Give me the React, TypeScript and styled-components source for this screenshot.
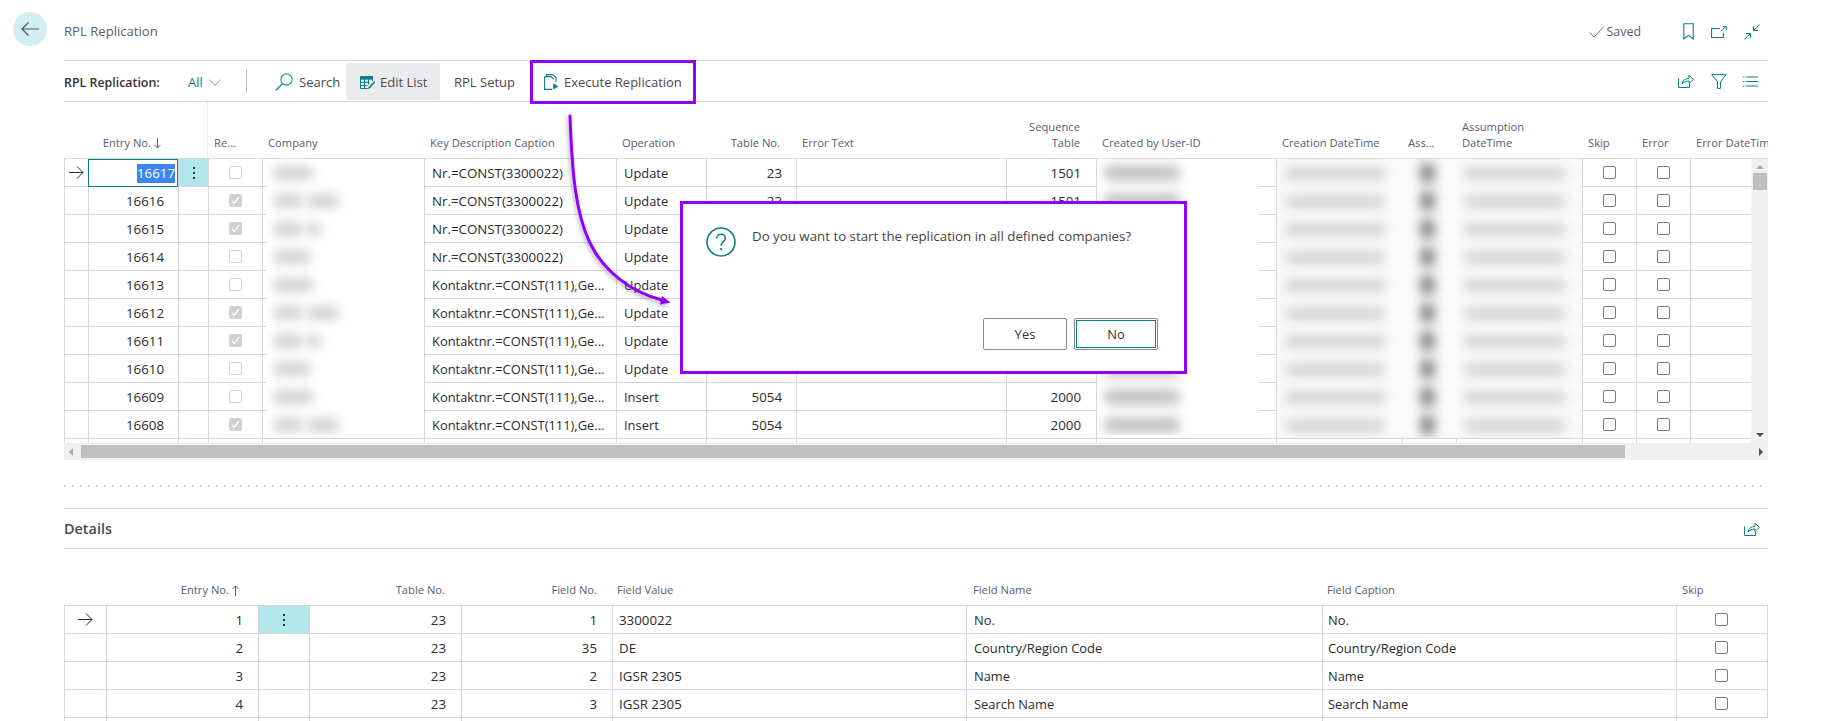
import React from "react";
import styled, { createGlobalStyle } from "styled-components";

const TEAL = "#0a7f85";
const LINE = "#d3d4dc";
const PURPLE = "#9000fa";
const FONT = `"Open Sans", "Noto Sans", "Liberation Sans", sans-serif`;

const Global = createGlobalStyle`
  html, body { margin: 0; padding: 0; background: #fff; overflow: hidden; height: 721px; }
  * { box-sizing: border-box; }
  body { font-family: ${FONT}; font-size: 13px; color: #212121; }
`;

const Page = styled.div`
  position: relative;
  display: flex;
  width: 1830px;
  height: 721px;
  overflow: hidden;
`;
const Gutter = styled.div`
  width: 64px;
  flex: none;
  padding: 12px 0 0 13px;
`;
const BackButton = styled.div`
  width: 34px;
  height: 34px;
  border-radius: 50%;
  background: #d3eef0;
  display: flex;
  align-items: center;
  justify-content: center;
  color: #555;
`;
const Main = styled.div`
  width: 1704px;
  flex: none;
`;
const TopBar = styled.div`
  height: 61px;
  border-bottom: 1px solid #d6d6d6;
  display: flex;
  align-items: center;
  padding-top: 3px;
`;
const PageTitle = styled.div`
  font-size: 13.1px;
  color: #56606e;
  flex: 1;
  margin-top: -2px;
`;
const Saved = styled.div`
  display: flex;
  align-items: center;
  gap: 2px;
  font-size: 12.4px;
  color: #56606e;
  margin-right: 42px;
`;
const IconRow = styled.div<{ $gap: number; $right: number }>`
  display: flex;
  align-items: center;
  gap: ${(p) => p.$gap}px;
  margin-right: ${(p) => p.$right}px;
  color: ${TEAL};
`;
const Toolbar = styled.div`
  height: 41px;
  border-bottom: 1px solid #d6d6d6;
  display: flex;
  align-items: center;
`;
const ListLabel = styled.div`
  font-weight: 600;
  font-size: 12.4px;
  color: #333;
  width: 124px;
  margin-top: 2px;
`;
const ViewFilter = styled.div`
  display: flex;
  align-items: center;
  gap: 6px;
  color: ${TEAL};
  font-size: 13px;
  width: 58px;
  margin-top: 2px;
`;
const Separator = styled.div`
  width: 1px;
  height: 24px;
  background: #bdbdbd;
  margin-right: 28px;
`;
const Action = styled.div<{ $w: number; $active?: boolean; $pad: number; $gap?: number }>`
  position: relative;
  width: ${(p) => p.$w}px;
  height: 37px;
  padding: 2px 0 0 ${(p) => p.$pad}px;
  display: flex;
  align-items: center;
  gap: ${(p) => p.$gap ?? 5}px;
  font-size: 13px;
  color: #4a4a4a;
  border-radius: 2px;
  background: ${(p) => (p.$active ? "#eaebed" : "transparent")};
  white-space: nowrap;
`;
const Highlight = styled.div`
  position: absolute;
  left: -1px;
  top: -3px;
  width: 166px;
  height: 44px;
  border: 3px solid ${PURPLE};
`;
const Spacer = styled.div`
  flex: 1;
`;

const Row = styled.div<{ $cols: string; $h?: number }>`
  display: grid;
  grid-template-columns: ${(p) => p.$cols};
  height: ${(p) => p.$h ?? 28}px;
`;
const HeadCell = styled.div<{ $right?: number; $left?: number; $rule?: boolean }>`
  display: flex;
  align-items: flex-end;
  justify-content: ${(p) => (p.$right !== undefined ? "flex-end" : "flex-start")};
  text-align: ${(p) => (p.$right !== undefined ? "right" : "left")};
  padding: 0 ${(p) => p.$right ?? 0}px 7px ${(p) => p.$left ?? 0}px;
  border-bottom: 1px solid ${LINE};
  border-right: ${(p) => (p.$rule ? "1px solid #eeeeee" : "none")};
  font-size: 11.2px;
  line-height: 16px;
  color: #56606e;
  white-space: nowrap;
  overflow: hidden;
`;
const SortIcon = styled.svg`
  margin-left: 3px;
  margin-bottom: 2px;
  flex: none;
`;
const Cell = styled.div<{ $right?: number; $left?: number; $center?: boolean; $more?: boolean; $open?: boolean; $end?: boolean; $digits?: boolean }>`
  display: flex;
  align-items: center;
  justify-content: ${(p) => (p.$center ? "center" : p.$right !== undefined ? "flex-end" : "flex-start")};
  padding: 0 ${(p) => p.$right ?? 0}px 0 ${(p) => p.$left ?? 0}px;
  border-left: 1px solid ${LINE};
  border-bottom: ${(p) => (p.$open ? "none" : `1px solid ${LINE}`)};
  border-right: ${(p) => (p.$end ? `1px solid ${LINE}` : "none")};
  background: ${(p) => (p.$more ? "#b2e8ec" : "transparent")};
  white-space: nowrap;
  overflow: hidden;
  font-size: ${(p) => (p.$digits ? 13.3 : 12.9)}px;
  color: #2a2a2a;
`;
const EditCell = styled(Cell)`
  border: 1.5px solid ${TEAL};
  padding-right: 2px;
`;
const Selected = styled.span`
  background: #3b86f0;
  color: #fff;
  line-height: 19px;
`;
const Dots = styled.div`
  display: flex;
  flex-direction: column;
  gap: 3px;
  i {
    display: block;
    width: 2px;
    height: 2px;
    background: #333;
  }
`;
const Check = styled.div<{ $state: "off" | "on" | "live" }>`
  width: 13px;
  height: 13px;
  border-radius: 2px;
  border: 1px solid ${(p) => (p.$state === "live" ? "#7a7a7a" : "#d4d4d4")};
  background: ${(p) => (p.$state === "on" ? "#d0d0d0" : "#fff")};
  display: flex;
  align-items: center;
  justify-content: center;
  color: #fff;
`;
const GridBody = styled.div`
  position: relative;
  display: flex;
`;
const RowsColumn = styled.div`
  width: 1687px;
  flex: none;
`;
const VScroll = styled.div`
  width: 17px;
  height: 284px;
  flex: none;
  background: #f0f0f0;
  display: flex;
  flex-direction: column;
  align-items: center;
`;
const VThumb = styled.div`
  width: 14px;
  height: 17px;
  background: #c0c0c0;
  margin-top: 4px;
`;
const Tri = styled.div<{ $dir: "up" | "down" | "left" | "right"; $color: string }>`
  width: 0;
  height: 0;
  flex: none;
  border: 4px solid transparent;
  ${(p) =>
    p.$dir === "up"
      ? `border-bottom-color:${p.$color};border-top-width:0;`
      : p.$dir === "down"
      ? `border-top-color:${p.$color};border-bottom-width:0;`
      : p.$dir === "left"
      ? `border-right-color:${p.$color};border-left-width:0;`
      : `border-left-color:${p.$color};border-right-width:0;`}
`;
const UpArrow = styled(Tri)`
  margin-top: 6px;
`;
const DownArrow = styled(Tri)`
  margin-top: auto;
  margin-bottom: 6px;
`;
const HScroll = styled.div`
  height: 17px;
  background: #f0f0f0;
  display: flex;
  align-items: center;
  padding: 0 5px;
`;
const HThumb = styled.div`
  width: 1544px;
  height: 13px;
  background: #c0c0c0;
  margin-left: 8px;
  margin-right: auto;
`;
const Patch = styled.div<{ $left: number; $w: number; $h: number; $bg: string }>`
  position: absolute;
  left: ${(p) => p.$left}px;
  top: 0;
  width: ${(p) => p.$w}px;
  height: ${(p) => p.$h}px;
  background: ${(p) => p.$bg};
  overflow: hidden;
`;
const PatchRow = styled.div`
  height: 28px;
  display: flex;
  align-items: center;
`;
const Blob = styled.div<{ $w: number; $ml: number; $c: string; $h?: number }>`
  width: ${(p) => p.$w}px;
  height: ${(p) => p.$h ?? 14}px;
  margin-left: ${(p) => p.$ml}px;
  background: ${(p) => p.$c};
  border-radius: 5px;
  filter: blur(5.5px);
  flex: none;
`;
const Dotted = styled.div`
  height: 2px;
  margin-top: 25px;
  background-image: repeating-linear-gradient(to right, #d4d4d4 0 2px, transparent 2px 8px);
`;
const SectionBar = styled.div`
  margin-top: 21px;
  height: 41px;
  border-top: 1px solid #d6d6d6;
  border-bottom: 1px solid #d6d6d6;
  display: flex;
  align-items: center;
  justify-content: space-between;
  padding-right: 8px;
`;
const SectionTitle = styled.div`
  font-weight: 600;
  font-size: 14.4px;
  color: #4a4a4a;
`;
const ShareTint = styled.div`
  color: ${TEAL};
  display: flex;
`;
const DetailGrid = styled.div`
  width: 1704px;
`;
const Dialog = styled.div`
  position: absolute;
  left: 680px;
  top: 201px;
  width: 507px;
  height: 173px;
  border: 3px solid ${PURPLE};
  background: #fff;
  padding: 23px 26px 21px 23px;
  display: flex;
  flex-direction: column;
`;
const DialogBody = styled.div`
  display: flex;
  gap: 16px;
  flex: 1;
  color: ${TEAL};
`;
const DialogText = styled.div`
  font-size: 13.3px;
  color: #444;
  line-height: 18px;
  white-space: nowrap;
`;
const DialogActions = styled.div`
  display: flex;
  justify-content: flex-end;
  gap: 7px;
`;
const DialogButton = styled.div<{ $primary?: boolean }>`
  width: 84px;
  height: 32px;
  border: 1px solid #8a8a8a;
  border-radius: 2px;
  display: flex;
  align-items: center;
  justify-content: center;
  font-size: 13px;
  color: #333;
  background: #fff;
  box-shadow: ${(p) => (p.$primary ? `inset 0 0 0 1px #fff, inset 0 0 0 2px ${TEAL}` : "none")};
`;
const Annotation = styled.svg`
  position: absolute;
  left: 0;
  top: 0;
  pointer-events: none;
`;

const ArrowRight = () => (
  <svg width="15" height="13" viewBox="0 0 15 13" fill="none" stroke="currentColor" strokeWidth="1">
    <path d="M0 6.5H14M8 .5l6 6-6 6" />
  </svg>
);
const BackArrow = () => (
  <svg width="18" height="14" viewBox="0 0 18 14" fill="none" stroke="currentColor" strokeWidth="1.2">
    <path d="M18 7H1M7.5.5L1 7l6.5 6.5" />
  </svg>
);
const CheckMark = () => (
  <svg width="9" height="9" viewBox="0 0 9 9" fill="none" stroke="currentColor" strokeWidth="1.4">
    <path d="M1 5l2.2 2.5L8 1" />
  </svg>
);
const SavedCheck = () => (
  <svg width="16" height="12" viewBox="0 0 16 12" fill="none" stroke="#6b7480" strokeWidth="1">
    <path d="M1 6.5l4 4.5L15 .5" />
  </svg>
);
const Bookmark = () => (
  <svg width="11" height="17" viewBox="0 0 11 17" fill="none" stroke="currentColor" strokeWidth="1.1">
    <path d="M.8.8h9.4v15L5.5 12.4.8 15.8z" />
  </svg>
);
const OpenNew = () => (
  <svg width="16" height="12" viewBox="0 0 16 12" fill="none" stroke="currentColor" strokeWidth="1.1">
    <path d="M9 2.5H.6v9h11.8V7" />
    <path d="M10 5l5-4.4M11.6.6h3.8v3.6" strokeWidth=".9" />
  </svg>
);
const Collapse = () => (
  <svg width="16" height="16" viewBox="0 0 16 16" fill="none" stroke="currentColor" strokeWidth="1">
    <path d="M15.5.5L9.5 6.5M9.5 2v4.5H14" />
    <path d="M.5 15.5l6-6M6.5 14V9.5H2" />
  </svg>
);
const Share = () => (
  <svg width="16" height="14" viewBox="0 0 16 14" fill="none" stroke="currentColor" strokeWidth="1">
    <path d="M.6 4.5v9h11v-4" />
    <path d="M4 10c.6-3.6 3-5.6 7-5.6V1.2l4.4 4.2L11 9.6V7c-3 0-5.2.8-7 3z" />
  </svg>
);
const Funnel = () => (
  <svg width="16" height="15" viewBox="0 0 16 15" fill="none" stroke="currentColor" strokeWidth="1">
    <path d="M.7.6h14.6L9.5 7.6v6.8h-3V7.6z" />
  </svg>
);
const ListIcon = () => (
  <svg width="15" height="11" viewBox="0 0 15 11" fill="none" stroke="currentColor" strokeWidth="1">
    <path d="M3 1h12M3 5.5h12M3 10h12M0 1h1.6M0 5.5h1.6M0 10h1.6" />
  </svg>
);
const Chevron = () => (
  <svg width="12" height="7" viewBox="0 0 12 7" fill="none" stroke="#8a8f96" strokeWidth="1">
    <path d="M.5.8L6 6.2 11.5.8" />
  </svg>
);
const SearchIcon = () => (
  <svg width="18" height="18" viewBox="0 0 18 18" fill="none" stroke="#2a9aa0" strokeWidth="1.2">
    <circle cx="11.5" cy="6.5" r="5.6" />
    <path d="M7.6 10.5L.8 17.4" strokeWidth="1.5" />
  </svg>
);
const EditIcon = () => (
  <svg width="15" height="13" viewBox="0 0 15 13" fill="none" stroke="#0a7f85" strokeWidth="1">
    <path d="M.5 .5h12v2.6H.5z" fill="#0a7f85" />
    <path d="M.5 3v9.5h7M.5 6.3h9M.5 9.4h7M4.5 3v9.5M8.5 3v5.5M12.5 3v2" />
    <path d="M14.3 5.2L9.2 10.8l-1.5 2 2.2-.9 5-5.5z" fill="#0a7f85" strokeWidth=".5" />
  </svg>
);
const ExecuteIcon = () => (
  <svg width="15" height="16" viewBox="0 0 15 16" fill="none" stroke="#0a7f85" strokeWidth="1.1">
    <path d="M2.6 2.6V.6h6.2L12 3.6v4.4M.6 2.6h6.6l2 2v1" />
    <path d="M.6 2.6v12.8h7.4" />
    <path d="M9.2 9.2l5.2 3.2-5.2 3.2z" fill="#0a7f85" stroke="none" />
  </svg>
);
const SortDown = () => (
  <SortIcon width="7" height="11" viewBox="0 0 7 11" fill="none" stroke="#56606e" strokeWidth="1">
    <path d="M3.5 0v10M.5 7l3 3 3-3" />
  </SortIcon>
);
const SortUp = () => (
  <SortIcon width="7" height="11" viewBox="0 0 7 11" fill="none" stroke="#56606e" strokeWidth="1">
    <path d="M3.5 11V1M.5 4l3-3 3 3" />
  </SortIcon>
);
const Question = () => (
  <svg width="30" height="30" viewBox="0 0 30 30" fill="none" stroke="currentColor" strokeWidth="1.6">
    <circle cx="15" cy="15" r="14" />
    <path d="M10.6 11.6c0-2.6 2-4.3 4.4-4.3s4.4 1.6 4.4 4c0 3.7-4.4 3.6-4.4 7.4" />
    <circle cx="15" cy="22.2" r="1.1" fill="currentColor" stroke="none" />
  </svg>
);

const MAIN_COLS = "24px 90px 30px 54px 162px 192px 90px 90px 210px 90px 180px 126px 54px 126px 54px 54px 61px";
const MAIN_HEAD = "24px 90px 30px 54px 162px 192px 90px 90px 210px 90px 180px 126px 54px 126px 54px 54px 78px";
const DETAIL_COLS = "42px 152px 51px 152px 151px 354px 356px 354px 92px";

const KEY_NR = "Nr.=CONST(3300022)";
const KEY_K = "Kontaktnr.=CONST(111),Ge...";
const rows = [
  { no: 16617, re: false, key: KEY_NR, op: "Update", table: 23, seq: 1501 },
  { no: 16616, re: true, key: KEY_NR, op: "Update", table: 23, seq: 1501 },
  { no: 16615, re: true, key: KEY_NR, op: "Update", table: 23, seq: 1501 },
  { no: 16614, re: false, key: KEY_NR, op: "Update", table: 23, seq: 1501 },
  { no: 16613, re: false, key: KEY_K, op: "Update", table: 5054, seq: 2000 },
  { no: 16612, re: true, key: KEY_K, op: "Update", table: 5054, seq: 2000 },
  { no: 16611, re: true, key: KEY_K, op: "Update", table: 5054, seq: 2000 },
  { no: 16610, re: false, key: KEY_K, op: "Update", table: 5054, seq: 2000 },
  { no: 16609, re: false, key: KEY_K, op: "Insert", table: 5054, seq: 2000 },
  { no: 16608, re: true, key: KEY_K, op: "Insert", table: 5054, seq: 2000 },
];
const details = [
  { no: 1, table: 23, field: 1, value: "3300022", name: "No." },
  { no: 2, table: 23, field: 35, value: "DE", name: "Country/Region Code" },
  { no: 3, table: 23, field: 2, value: "IGSR 2305", name: "Name" },
  { no: 4, table: 23, field: 3, value: "IGSR 2305", name: "Search Name" },
];
const companyBlobs = [[40], [30, 32], [30, 14], [38], [40], [30, 32], [30, 14], [38], [40], [30, 32]];

const MoreDots = () => (
  <Dots>
    <i />
    <i />
    <i />
  </Dots>
);

export default function App() {
  return (
    <Page>
      <Global />
      <Gutter>
        <BackButton>
          <BackArrow />
        </BackButton>
      </Gutter>
      <Main>
        <TopBar>
          <PageTitle>RPL Replication</PageTitle>
          <Saved>
            <SavedCheck />
            Saved
          </Saved>
          <IconRow $gap={17} $right={8}>
            <Bookmark />
            <OpenNew />
            <Collapse />
          </IconRow>
        </TopBar>
        <Toolbar>
          <ListLabel>RPL Replication:</ListLabel>
          <ViewFilter>
            All
            <Chevron />
          </ViewFilter>
          <Separator />
          <Action $w={71} $pad={0} $gap={6}>
            <SearchIcon />
            Search
          </Action>
          <Action $w={94} $pad={14} $active>
            <EditIcon />
            Edit List
          </Action>
          <Action $w={91} $pad={14}>RPL Setup</Action>
          <Action $w={164} $pad={13}>
            <ExecuteIcon />
            Execute Replication
            <Highlight />
          </Action>
          <Spacer />
          <IconRow $gap={16.5} $right={10}>
            <Share />
            <Funnel />
            <ListIcon />
          </IconRow>
        </Toolbar>

        <Row $cols={MAIN_HEAD} $h={57}>
          <HeadCell />
          <HeadCell $right={17}>
            Entry No.
            <SortDown />
          </HeadCell>
          <HeadCell $rule />
          <HeadCell $left={6}>Re...</HeadCell>
          <HeadCell $left={6}>Company</HeadCell>
          <HeadCell $left={6}>Key Description Caption</HeadCell>
          <HeadCell $left={6}>Operation</HeadCell>
          <HeadCell $right={16}>Table No.</HeadCell>
          <HeadCell $left={6}>Error Text</HeadCell>
          <HeadCell $right={16}>
            Sequence
            <br />
            Table
          </HeadCell>
          <HeadCell $left={6}>Created by User-ID</HeadCell>
          <HeadCell $left={6}>Creation DateTime</HeadCell>
          <HeadCell $left={6}>Ass...</HeadCell>
          <HeadCell $left={6}>
            Assumption
            <br />
            DateTime
          </HeadCell>
          <HeadCell $left={6}>Skip</HeadCell>
          <HeadCell $left={6}>Error</HeadCell>
          <HeadCell $left={6}>Error DateTime</HeadCell>
        </Row>
        <GridBody>
          <RowsColumn>
            {rows.map((r, i) => (
              <Row key={r.no} $cols={MAIN_COLS}>
                <Cell $center>{i === 0 && <ArrowRight />}</Cell>
                {i === 0 ? (
                  <EditCell $right={2} $digits>
                    <Selected>{r.no}</Selected>
                  </EditCell>
                ) : (
                  <Cell $right={14} $digits>{r.no}</Cell>
                )}
                <Cell $more={i === 0} $center>
                  {i === 0 && <MoreDots />}
                </Cell>
                <Cell $center>
                  <Check $state={r.re ? "on" : "off"}>{r.re && <CheckMark />}</Check>
                </Cell>
                <Cell />
                <Cell $left={7} $digits={r.key === KEY_NR}>{r.key}</Cell>
                <Cell $left={7}>{r.op}</Cell>
                <Cell $right={14} $digits>{r.table}</Cell>
                <Cell />
                <Cell $right={15} $digits>{r.seq}</Cell>
                <Cell />
                <Cell />
                <Cell />
                <Cell />
                <Cell $center>
                  <Check $state="live" />
                </Cell>
                <Cell $center>
                  <Check $state="live" />
                </Cell>
                <Cell />
              </Row>
            ))}
            <Row $cols={MAIN_COLS} $h={4}>
              {MAIN_COLS.split(" ").map((c, i) => (
                <Cell key={i} $open />
              ))}
            </Row>
          </RowsColumn>
          <VScroll>
            <UpArrow $dir="up" $color="#a6a6a6" />
            <VThumb />
            <DownArrow $dir="down" $color="#505050" />
          </VScroll>
          <Patch $left={203} $w={157} $h={276} $bg="#fff">
            {companyBlobs.map((b, i) => (
              <PatchRow key={i}>
                {b.map((w, j) => (
                  <Blob key={j} $w={w} $ml={j === 0 ? 6 : 4} $c="#d2d2d2" />
                ))}
              </PatchRow>
            ))}
          </Patch>
          <Patch $left={1033} $w={161} $h={276} $bg="#fff">
            {rows.map((r) => (
              <PatchRow key={r.no}>
                <Blob $w={76} $ml={7} $c="#c4c4c6" $h={16} />
              </PatchRow>
            ))}
          </Patch>
          <Patch $left={1213} $w={305} $h={279} $bg="#fafafa">
            {rows.map((r) => (
              <PatchRow key={r.no}>
                <Blob $w={100} $ml={8} $c="#d2d3d3" $h={13} />
                <Blob $w={15} $ml={35} $c="#8c8c8c" $h={20} />
                <Blob $w={102} $ml={29} $c="#d2d3d3" $h={13} />
              </PatchRow>
            ))}
          </Patch>
        </GridBody>
        <HScroll>
          <Tri $dir="left" $color="#a6a6a6" />
          <HThumb />
          <Tri $dir="right" $color="#505050" />
        </HScroll>
        <Dotted />
        <SectionBar>
          <SectionTitle>Details</SectionTitle>
          <ShareTint>
            <Share />
          </ShareTint>
        </SectionBar>
        <DetailGrid>
          <Row $cols={DETAIL_COLS} $h={57}>
            <HeadCell />
            <HeadCell $right={19}>
              Entry No.
              <SortUp />
            </HeadCell>
            <HeadCell />
            <HeadCell $right={16}>Table No.</HeadCell>
            <HeadCell $right={15}>Field No.</HeadCell>
            <HeadCell $left={5}>Field Value</HeadCell>
            <HeadCell $left={7}>Field Name</HeadCell>
            <HeadCell $left={5}>Field Caption</HeadCell>
            <HeadCell $left={6}>Skip</HeadCell>
          </Row>
          {details.map((d, i) => (
            <Row key={d.no} $cols={DETAIL_COLS}>
              <Cell $center>{i === 0 && <ArrowRight />}</Cell>
              <Cell $right={15} $digits>{d.no}</Cell>
              <Cell $more={i === 0} $center>
                {i === 0 && <MoreDots />}
              </Cell>
              <Cell $right={15} $digits>{d.table}</Cell>
              <Cell $right={15} $digits>{d.field}</Cell>
              <Cell $left={6} $digits>{d.value}</Cell>
              <Cell $left={7}>{d.name}</Cell>
              <Cell $left={5}>{d.name}</Cell>
              <Cell $center $end $right={2}>
                <Check $state="live" />
              </Cell>
            </Row>
          ))}
          <Row $cols={DETAIL_COLS} $h={6}>
            {DETAIL_COLS.split(" ").map((c, i) => (
              <Cell key={i} $open />
            ))}
          </Row>
        </DetailGrid>
      </Main>
      <Annotation width="1830" height="721" viewBox="0 0 1830 721" fill="none">
        <defs>
          <filter id="arrowShadow" x="-20%" y="-20%" width="140%" height="140%">
            <feDropShadow dx="-1" dy="2" stdDeviation="2" floodColor="#000" floodOpacity="0.35" />
          </filter>
        </defs>
        <g filter="url(#arrowShadow)">
          <path d="M570 116C572 170 575 212 590 243C603 270 630 292 662 300" stroke={PURPLE} strokeWidth="3" strokeLinecap="round" />
          <path d="M670.5 302.5L660 304.5L662 296z" fill={PURPLE} />
        </g>
      </Annotation>
      <Dialog>
        <DialogBody>
          <Question />
          <DialogText>Do you want to start the replication in all defined companies?</DialogText>
        </DialogBody>
        <DialogActions>
          <DialogButton>Yes</DialogButton>
          <DialogButton $primary>No</DialogButton>
        </DialogActions>
      </Dialog>
    </Page>
  );
}
